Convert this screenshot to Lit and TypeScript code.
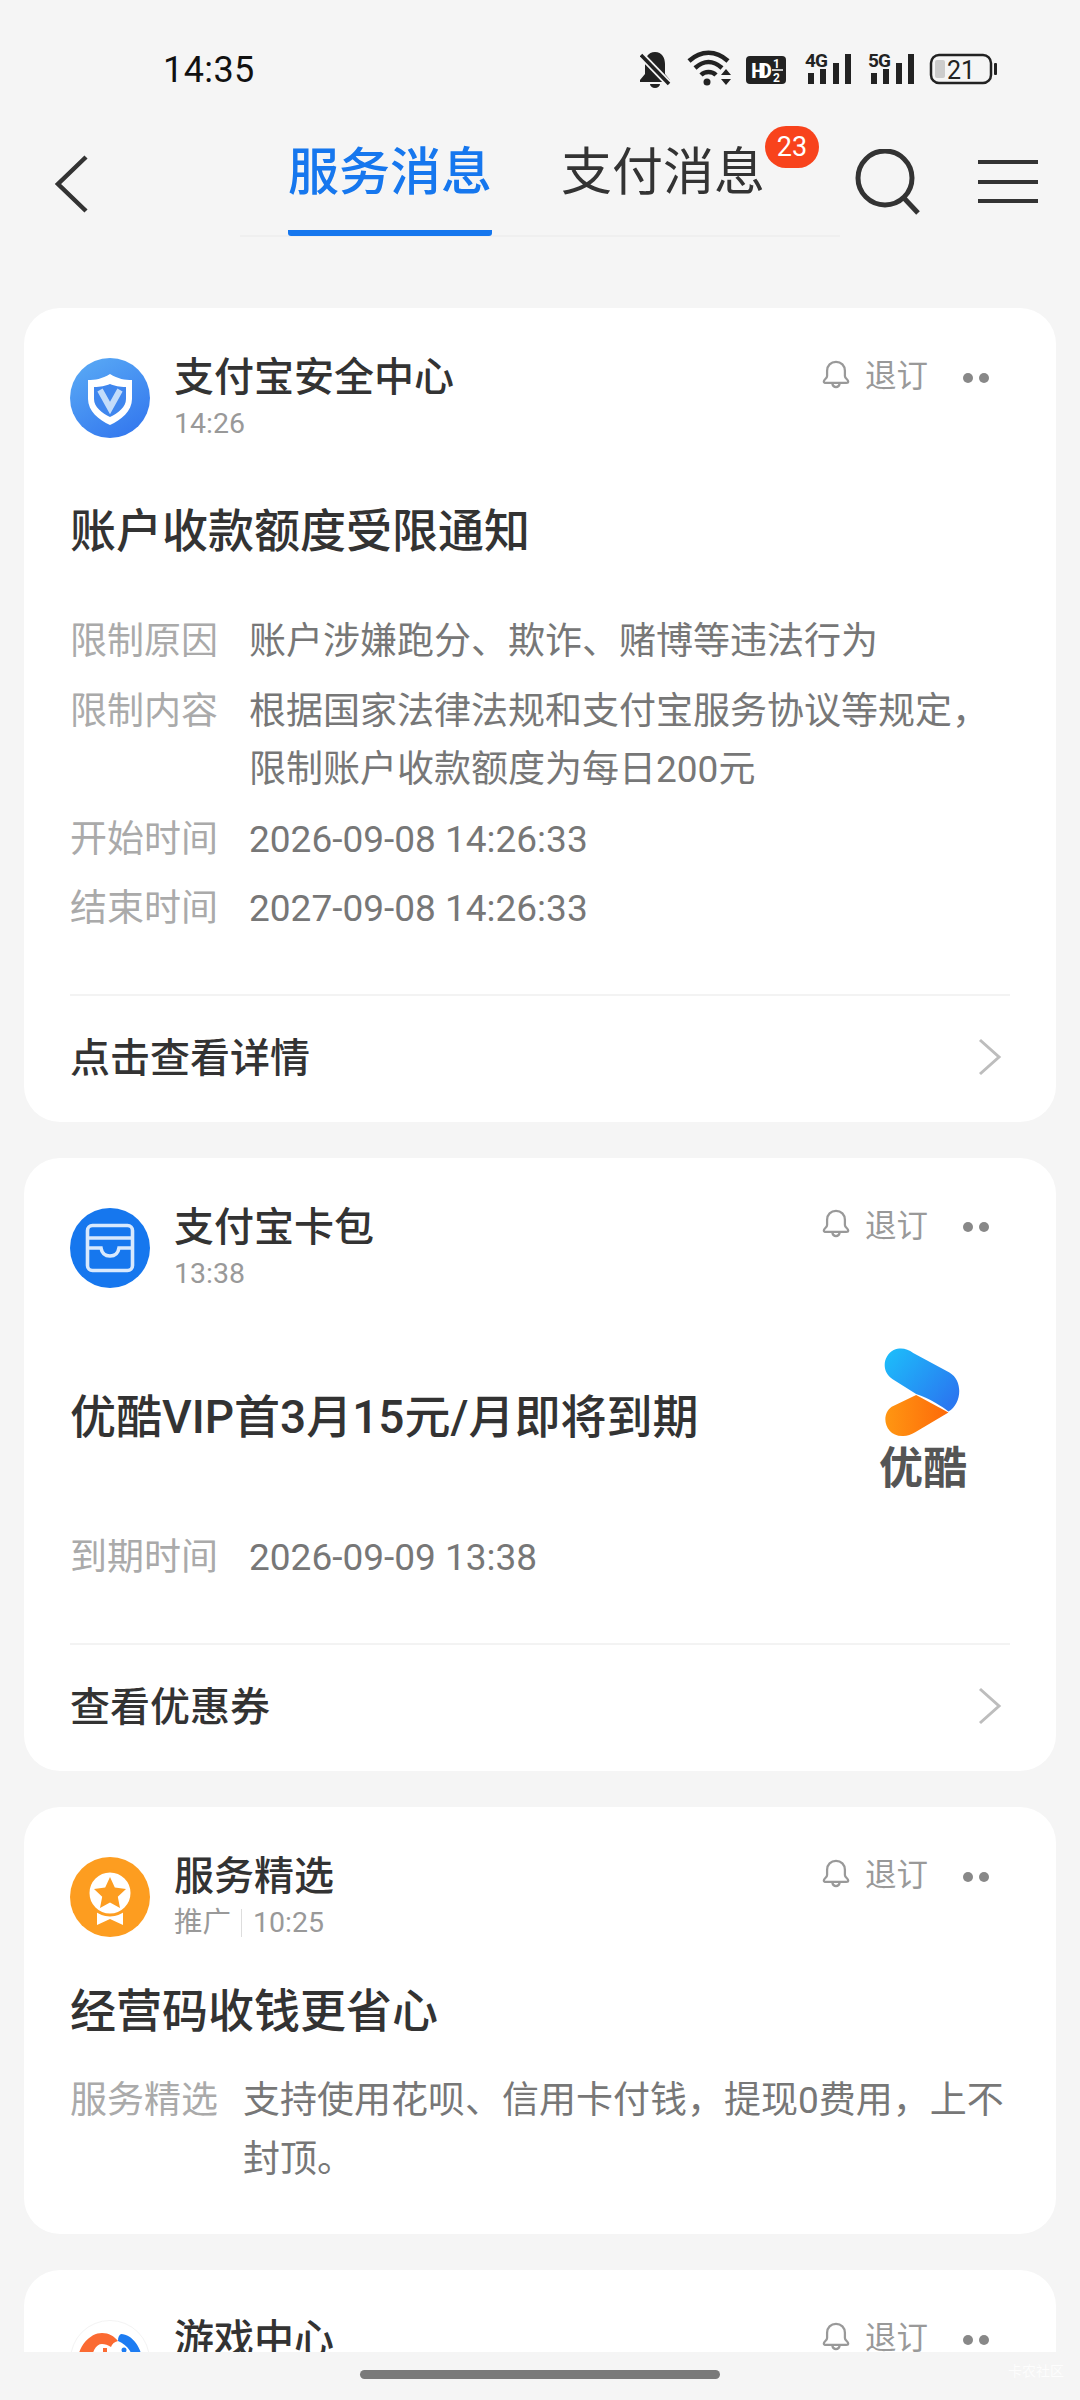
import { LitElement, html, css, svg } from "lit";
import { customElement } from "lit/decorators.js";

const chevron = html`<svg class="chev" width="24" height="38" viewBox="0 0 24 38"><path d="M2 2 L21 19 L2 36" fill="none" stroke="#bdbdbd" stroke-width="3"/></svg>`;

const bell = html`<svg class="bell" width="30" height="30" viewBox="0 0 32 32" fill="none" stroke="#999" stroke-width="2.4" stroke-linejoin="round"><path d="M3 24 C3 21.5 6.5 21 6.5 18 V12.5 C6.5 7 10.5 3 16 3 S25.5 7 25.5 12.5 V18 C25.5 21 29 21.500 29 24 C29 25 28 25.500 27 25.500 H5 C4 25.500 3 25 3 24 Z"/><path d="M12 26 C12.500 29 14 30 16 30 S19.500 29 20 26"/></svg>`;

const shieldIcon = svg`<defs><linearGradient id="g1" x1="0.2" y1="0" x2="0.8" y2="1"><stop offset="0" stop-color="#58a8f5"/><stop offset="1" stop-color="#3377ee"/></linearGradient></defs>
<circle cx="40" cy="40" r="40" fill="url(#g1)"/>
<path d="M40 16 C48 21 55 22 62 22 V41 C62 53 51 62 40 67 C29 62 18 53 18 41 V22 C25 22 32 21 40 16 Z" fill="#fff"/>
<path d="M40 26 C45 28 49 29 56 29 V41 C56 49 48 55 40 59 C32 55 24 49 24 41 V29 C31 29 35 28 40 26 Z" fill="#3f86ee"/>
<path d="M30 32 L40 50 L50 32" fill="none" stroke="#c3dcfa" stroke-width="6"/>`;

const walletIcon = svg`<circle cx="40" cy="40" r="40" fill="#1677ee"/>
<rect x="17.500" y="17.500" width="45" height="45" rx="5" fill="none" stroke="#d8e9fd" stroke-width="3.600"/>
<path d="M18 30 H62" stroke="#d8e9fd" stroke-width="3.600"/>
<path d="M18 40 H31 C32 46 36 48 40 48 S48 46 49 40 H62" fill="none" stroke="#d8e9fd" stroke-width="3.600"/>`;

const medalIcon = svg`<circle cx="40" cy="40" r="40" fill="#fd9d20"/>
<path d="M27 52 V68 L40 62 L53 68 V52 Z" fill="#fff"/>
<circle cx="40" cy="36" r="22" fill="#fff" stroke="#fd9d20" stroke-width="3"/>
<path d="M40 20 L44.800 30.500 L56 32 L47.800 39.800 L50 51 L40 45.500 L30 51 L32.200 39.800 L24 32 L35.200 30.500 Z" fill="#fd9d20"/>`;

const gameIcon = svg`<circle cx="40" cy="40" r="39.500" fill="#fff" stroke="#f3f3f3"/>
<path d="M7 60 V46 C7 26 20 13 32 13 C39 13 44 16 48 21 C44 22 42 24 41 27 C38 25 35 24 32 24 C26 24 21 32 21 46 V60 Z" fill="#fb6a32"/>
<path d="M51 14 C62 14 73 28 73 46 V60 H64 V46 C64 34 58 25 48 21 C48 17 49 15 51 14 Z" fill="#1d7cf2"/>
<path d="M33 28 H37 V32 H41 V36 H37 V40 H33 V36 H29 V32 H33 Z" fill="#fb6a32"/>
<circle cx="54" cy="30" r="2.500" fill="#1d7cf2"/>`;

interface Row { l: string; v: string[]; }
interface Card {
  icon: unknown; name: string; tag?: string; time: string; title: string; rows: Row[];
  action?: string; variant: string; logo?: boolean;
}

const cards: Card[] = [
  { icon: shieldIcon, name: "支付宝安全中心", time: "14:26", title: "账户收款额度受限通知", variant: "a", action: "点击查看详情",
    rows: [
      { l: "限制原因", v: ["账户涉嫌跑分、欺诈、赌博等违法行为"] },
      { l: "限制内容", v: ["根据国家法律法规和支付宝服务协议等规定，", "限制账户收款额度为每日200元"] },
      { l: "开始时间", v: ["2026-09-08 14:26:33"] },
      { l: "结束时间", v: ["2027-09-08 14:26:33"] },
    ] },
  { icon: walletIcon, name: "支付宝卡包", time: "13:38", title: "优酷VIP首3月15元/月即将到期", variant: "b", action: "查看优惠券", logo: true,
    rows: [{ l: "到期时间", v: ["2026-09-09 13:38"] }] },
  { icon: medalIcon, name: "服务精选", tag: "推广", time: "10:25", title: "经营码收钱更省心", variant: "c",
    rows: [{ l: "服务精选", v: ["支持使用花呗、信用卡付钱，提现0费用，上不", "封顶。"] }] },
];

@customElement("app-root")
export class AppRoot extends LitElement {
  static styles = css`
    :host { display: block; width: 1080px; height: 2400px; position: relative; overflow: hidden; background: #f5f5f5;
      font-family: "Roboto", "Noto Sans CJK SC", sans-serif; color: #333; }
    .status { height: 92px; padding: 46px 0 0 163px; box-sizing: border-box; display: flex; align-items: flex-start; }
    .clock { font-size: 36px; line-height: 48px; color: #111; width: 477px; letter-spacing: .4px; }
    .sicons { display: flex; }
    .nav { height: 144px; position: relative; display: flex; }
    .back { margin: 63px 0 0 54px; width: 34px; height: 58px; }
    .tabs { margin-left: 200px; width: 552px; display: flex; gap: 69px; height: 144px; position: relative; }
    .tab { font-size: 51px; line-height: 60px; margin-top: 51px; width: 204px; height: 93px; white-space: nowrap; position: relative; font-weight: 400; }
    .tab.on { color: #1677ee; border-bottom: 6px solid #1677ee; border-radius: 0 0 3px 3px; box-sizing: border-box; font-weight: 500; }
    .nav-line { position: absolute; left: 240px; width: 600px; top: 143px; height: 2px; background: #efefef; }
    .badge { position: absolute; left: 204px; top: -17px; width: 54px; height: 42px; border-radius: 21px; background: #f8431c; color: #fff; font-size: 27px; line-height: 42px; text-align: center; }
    .search { position: absolute; left: 855px; top: 57px; }
    .menu { position: absolute; left: 978px; top: 68px; width: 60px; height: 43px; display: flex; flex-direction: column; justify-content: space-between; }
    .menu i { display: block; height: 4px; background: #333; }
    .list { padding: 72px 24px 0; display: flex; flex-direction: column; gap: 36px; }
    .card { background: #fff; border-radius: 36px; padding: 50px 46px 0; }
    .head { display: flex; height: 80px; }
    .avatar { width: 80px; height: 80px; flex: none; display: block; }
    .who { margin-left: 24px; flex: 1; }
    .name { font-size: 40px; line-height: 40px; color: #333; font-weight: 500; }
    .meta { font-size: 28.500px; line-height: 34px; margin-top: 9px; color: #999; display: flex; align-items: center; }
    .tag { padding-right: 10px; margin-right: 11px; border-right: 1px solid #ddd; line-height: 28px; }
    .unsub { display: flex; align-items: center; height: 40px; margin-top: -5px; color: #999; font-size: 31.500px; }
    .bell { margin-right: 14px; margin-top: 1px; }
    .dots { display: flex; gap: 6px; margin: 9px 21px 0 35px; }
    .dots i { width: 10px; height: 10px; border-radius: 50%; background: #888; display: block; }
    .title { font-size: 46px; line-height: 60px; font-weight: 500; color: #333; }
    .a .title { margin-top: 63px; }
    .b .title { margin-top: 99px; }
    .c .title { margin-top: 44px; }
    .title-row { display: flex; justify-content: space-between; }
    .logo { margin: 60px 42px 0 0; width: 90px; height: 147px; display: flex; flex-direction: column; align-items: center; flex: none; }
    .logo b { font-size: 44px; line-height: 52px; color: #555; font-weight: 700; white-space: nowrap; margin-top: 5px; }
    .rows { display: flex; flex-direction: column; gap: 11px; }
    .a .rows { margin-top: 52px; }
    .b .rows { margin-top: 34px; }
    .c .rows { margin-top: 31px; padding-bottom: 45px; }
    .row { display: flex; font-size: 37px; line-height: 58.500px; }
    .lab { width: 179px; flex: none; color: #aaa; white-space: nowrap; }
    .c .lab { width: 173px; }
    .val { color: #777; white-space: nowrap; }
    .foot { margin-top: 55px; border-top: 2px solid #f3f3f3; height: 128px; box-sizing: border-box; padding-bottom: 8px; display: flex; align-items: center; justify-content: space-between; font-size: 40px; font-weight: 500; color: #333; }
    .b .foot { margin-top: 56px; }
    .chev { margin: 4px 8px 0 0; }
    .clip { height: 200px; }
    .bottom { position: absolute; left: 0; right: 0; bottom: 0; height: 48px; background: #f5f5f5; }
    .home { position: absolute; left: 360px; top: 18px; width: 360px; height: 9px; border-radius: 5px; background: #7a7a7a; }
    .wm { position: absolute; right: 16px; top: 8px; font-size: 14px; color: #fff; opacity: .8; }
  `;

  private status() {
    return html`<svg class="sicons" width="360" height="46" viewBox="640 46 360 46">
      <g fill="#222">
        <path d="M655 52 C648 52 645 58 645 64 V74 L640 80 V82 H670 V80 L665 74 V64 C665 58 662 52 655 52 Z"/>
        <path d="M650 84 a5 4 0 0 0 10 0 Z"/>
      </g>
      <path d="M641 55 L669 84" stroke="#f5f5f5" stroke-width="7"/>
      <path d="M641 55 L669 84" stroke="#222" stroke-width="3.500"/>
      <g fill="none" stroke="#222" stroke-width="4.500">
        <path d="M689 61 C701 50 716 50 728 61"/>
        <path d="M695 68 C704 60 713 60 722 68"/>
        <path d="M701 75 C705 71 712 71 716 75"/>
      </g>
      <circle cx="707" cy="82" r="3.500" fill="#222"/>
      <path d="M721 75 L726 69 L731 75 Z M721 79 H731 L726 85 Z" fill="#222"/>
      <rect x="746" y="56" width="40" height="28" rx="4" fill="#222"/>
      <text x="751" y="78" font-size="21" font-weight="700" fill="#fff" font-family="Roboto" textLength="21">HD</text>
      <text x="773" y="68" font-size="12" font-weight="700" fill="#fff" font-family="Roboto">1</text>
      <text x="773" y="82" font-size="12" font-weight="700" fill="#fff" font-family="Roboto">2</text>
      <path d="M772 70 H783" stroke="#fff" stroke-width="1.500"/>
      <text x="805" y="67" font-size="19" font-weight="700" fill="#222" font-family="Roboto" textLength="23">4G</text>
      <g fill="#222"><rect x="808" y="73" width="6" height="11"/><rect x="820" y="69" width="6" height="15"/><rect x="833" y="63" width="6" height="21"/><rect x="845" y="54" width="6" height="30"/></g>
      <text x="868" y="67" font-size="19" font-weight="700" fill="#222" font-family="Roboto" textLength="23">5G</text>
      <g fill="#222"><rect x="871" y="73" width="6" height="11"/><rect x="883" y="69" width="6" height="15"/><rect x="896" y="63" width="6" height="21"/><rect x="908" y="54" width="6" height="30"/></g>
      <rect x="931" y="55" width="60" height="28" rx="8" fill="none" stroke="#222" stroke-width="2.500"/>
      <rect x="935" y="60" width="10" height="18" rx="2" fill="#ccc"/>
      <text x="947" y="79" font-size="25" fill="#222" font-family="Roboto">21</text>
      <rect x="994" y="63" width="3" height="12" rx="1" fill="#222"/>
    </svg>`;
  }

  private head(c: { icon: unknown; name: string; tag?: string; time: string }) {
    return html`<div class="head">
      <svg class="avatar" viewBox="0 0 80 80">${c.icon}</svg>
      <div class="who">
        <div class="name">${c.name}</div>
        <div class="meta">${c.tag ? html`<span class="tag">${c.tag}</span>` : ""}<span>${c.time}</span></div>
      </div>
      <div class="unsub">${bell}<span>退订</span><div class="dots"><i></i><i></i></div></div>
    </div>`;
  }

  render() {
    return html`
      <div class="status"><div class="clock">14:35</div>${this.status()}</div>
      <div class="nav">
        <svg class="back" viewBox="0 0 34 58"><path d="M32 2 L4 29 L32 56" fill="none" stroke="#333" stroke-width="4.500"/></svg>
        <div class="nav-line"></div>
        <div class="tabs">
          <div class="tab on">服务消息</div>
          <div class="tab">支付消息<span class="badge">23</span></div>
        </div>
        <svg class="search" width="66" height="68" viewBox="0 0 66 68" fill="none" stroke="#333" stroke-width="5"><circle cx="30" cy="29" r="27"/><path d="M48 48 L63 64"/></svg>
        <div class="menu"><i></i><i></i><i></i></div>
      </div>
      <div class="list">
        ${cards.map((c) => html`<section class="card ${c.variant}">
          ${this.head(c)}
          ${c.logo ? html`<div class="title-row">
            <div class="title">${c.title}</div>
            <div class="logo">
              <svg width="82" height="94" viewBox="0 0 80 92">
                <defs>
                  <linearGradient id="yb" x1="0" y1="0" x2="1" y2="0.700"><stop offset="0" stop-color="#1cc0fb"/><stop offset="1" stop-color="#2a78f0"/></linearGradient>
                  <linearGradient id="yo" x1="0" y1="0" x2="1" y2="0"><stop offset="0" stop-color="#ff9612"/><stop offset="1" stop-color="#fd6a0a"/></linearGradient>
                </defs>
                <path d="M33 48 L8 60 C-4 68 1 91 20 90 C24 90 28 88 32 86 L66 66 Z" fill="url(#yo)"/>
                <path d="M10 2 C18 -1 24 1 30 5 L67 25 C82 34 79 58 66 65 C60 60 46 51 33 47 L9 32 C-3 24 -1 8 10 2 Z" fill="url(#yb)"/>
              </svg>
              <b>优酷</b>
            </div>
          </div>` : html`<div class="title">${c.title}</div>`}
          <div class="rows">
            ${c.rows.map((r) => html`<div class="row"><div class="lab">${r.l}</div><div class="val">${r.v.map((t) => html`<div>${t}</div>`)}</div></div>`)}
          </div>
          ${c.action ? html`<div class="foot"><span>${c.action}</span>${chevron}</div>` : ""}
        </section>`)}
        <section class="card clip">${this.head({ icon: gameIcon, name: "游戏中心", time: "" })}</section>
      </div>
      <div class="bottom"><div class="home"></div><div class="wm">卡农社区</div></div>
    `;
  }
}
